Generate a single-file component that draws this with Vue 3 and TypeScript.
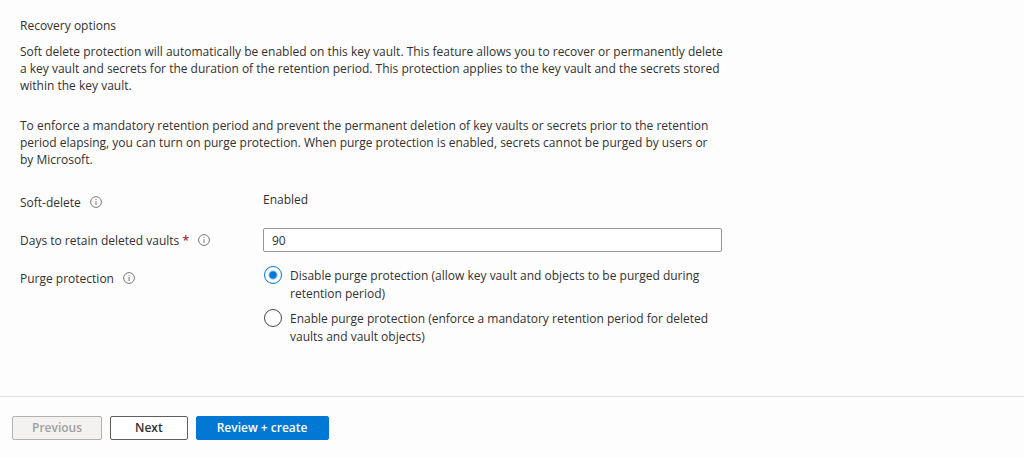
<script setup lang="ts">
import { ref } from 'vue'

const days = ref('90')
const purge = ref<'disable' | 'enable'>('disable')

const options: { value: 'disable' | 'enable'; label: string }[] = [
  {
    value: 'disable',
    label: 'Disable purge protection (allow key vault and objects to be purged during retention period)',
  },
  {
    value: 'enable',
    label: 'Enable purge protection (enforce a mandatory retention period for deleted vaults and vault objects)',
  },
]
</script>

<template>
  <form class="page" @submit.prevent>
    <main class="content">
      <h2 class="heading">Recovery options</h2>
      <p class="para">
        Soft delete protection will automatically be enabled on this key vault. This feature allows you to recover or
        permanently delete a key vault and secrets for the duration of the retention period. This protection applies to
        the key vault and the secrets stored within the key vault.
      </p>
      <p class="para">
        To enforce a mandatory retention period and prevent the permanent deletion of key vaults or secrets prior to
        the retention period elapsing, you can turn on purge protection. When purge protection is enabled, secrets
        cannot be purged by users or by&nbsp;Microsoft.
      </p>

      <div class="fields">
        <div class="label">
          <span>Soft-delete</span>
          <svg class="info" viewBox="0 0 12 12" aria-hidden="true">
            <circle cx="6" cy="6" r="5.4" />
            <path d="M6 5v4M6 3v1" />
          </svg>
        </div>
        <div class="value">Enabled</div>

        <div class="label">
          <label for="days">Days to retain deleted vaults <span class="required">*</span></label>
          <svg class="info" viewBox="0 0 12 12" aria-hidden="true">
            <circle cx="6" cy="6" r="5.4" />
            <path d="M6 5v4M6 3v1" />
          </svg>
        </div>
        <input id="days" v-model="days" class="text-box" type="text" required />

        <div class="label">
          <span id="purge-label">Purge protection</span>
          <svg class="info" viewBox="0 0 12 12" aria-hidden="true">
            <circle cx="6" cy="6" r="5.4" />
            <path d="M6 5v4M6 3v1" />
          </svg>
        </div>
        <div class="options" role="radiogroup" aria-labelledby="purge-label">
          <label v-for="option in options" :key="option.value" class="option" :for="option.value">
            <input :id="option.value" v-model="purge" class="radio" type="radio" name="purge" :value="option.value" />
            <span class="option-text">{{ option.label }}</span>
          </label>
        </div>
      </div>
    </main>

    <footer class="actions">
      <button class="button previous" type="button" disabled>Previous</button>
      <button class="button next" type="button">Next</button>
      <button class="button primary" type="submit">Review + create</button>
    </footer>
  </form>
</template>

<style>
body {
  background: #fdfdfd;
}
</style>

<style scoped>
.page {
  color: #323130;
  font-family: 'Segoe UI', 'Open Sans', 'Noto Sans', sans-serif;
  font-size: 12px;
  line-height: 17px;
}

.content {
  padding: 17px 20px 50px;
}

.heading {
  margin: 0 0 9px;
  font-size: 12px;
  font-weight: 400;
}

.para {
  max-width: 710px;
  margin: 0 0 22px;
}

.heading + .para {
  margin-bottom: 23px;
}

.fields {
  display: grid;
  grid-template-columns: 243px minmax(0, 1fr);
  row-gap: 14px;
  max-width: 702px;
}

.label {
  display: flex;
  align-items: center;
  gap: 9px;
  height: 24px;
}

.required {
  color: #a4262c;
  font-weight: 600;
}

.info {
  width: 12px;
  height: 12px;
  fill: none;
  stroke: #7a7876;
  stroke-width: 1;
}

.value {
  padding-top: 1px;
  line-height: 18px;
}

.text-box {
  box-sizing: border-box;
  width: 100%;
  height: 24px;
  padding: 0 8px;
  border: 1px solid #979593;
  border-radius: 2px;
  background: #fff;
  color: inherit;
  font: inherit;
}

.options {
  display: flex;
  flex-direction: column;
  gap: 6px;
  padding-left: 1px;
}

.option {
  display: flex;
  align-items: flex-start;
  gap: 8px;
  line-height: 18px;
}

.option-text {
  padding-top: 1px;
}

.radio {
  flex: none;
  width: 18px;
  height: 18px;
  margin: 0;
  border: 1px solid #484644;
  border-radius: 50%;
  background: #fff;
  appearance: none;
}

.radio:checked {
  border-color: #0078d4;
  background: radial-gradient(circle, #0078d4 3px, #fff 5px);
}

.actions {
  display: flex;
  gap: 8px;
  padding: 19px 12px;
  border-top: 1px solid #e1e1e1;
}

.button {
  box-sizing: border-box;
  height: 24px;
  padding: 0 20px;
  border: 1px solid #605e5c;
  border-radius: 2px;
  background: #fff;
  color: #323130;
  font: inherit;
  font-weight: 600;
  line-height: 20px;
}

.previous {
  padding: 0 19px;
  border-color: #b3b0ad;
  background: #f3f2f1;
  color: #a19f9d;
}

.next {
  padding: 0 24px;
}

.primary {
  border-color: #0078d4;
  background: #0078d4;
  color: #fff;
}
</style>
